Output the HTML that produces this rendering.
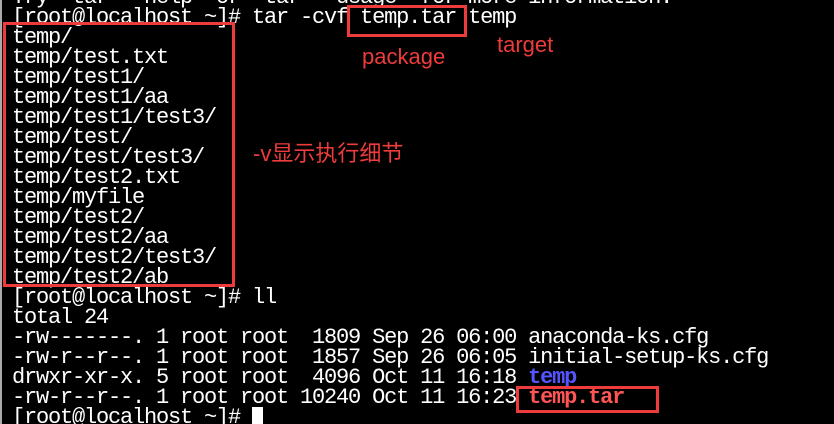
<!DOCTYPE html>
<html><head><meta charset="utf-8"><style>
html,body{margin:0;padding:0;background:#000;width:834px;height:424px;overflow:hidden;position:relative}
.t{position:absolute;left:12px;top:-12px;font-family:"Liberation Mono",monospace;font-size:22px;letter-spacing:-1.2px;color:#fff}
.t div{height:20px;line-height:20px;white-space:pre}
.b{position:absolute;border:3px solid #ee3b3b}
.l{position:absolute;color:#ee3b3b;font-family:"Liberation Sans","Noto Sans CJK SC",sans-serif;font-size:22px;line-height:26px;white-space:nowrap}
.edge{position:absolute;left:0;top:0;width:2px;height:424px;background:#aaa}
</style></head><body>
<div class="edge"></div>
<div class="t"><div>Try 'tar --help' or 'tar --usage' for more information.</div><div>[root@localhost ~]# tar -cvf temp.tar temp</div><div>temp/</div><div>temp/test.txt</div><div>temp/test1/</div><div>temp/test1/aa</div><div>temp/test1/test3/</div><div>temp/test/</div><div>temp/test/test3/</div><div>temp/test2.txt</div><div>temp/myfile</div><div>temp/test2/</div><div>temp/test2/aa</div><div>temp/test2/test3/</div><div>temp/test2/ab</div><div>[root@localhost ~]# ll</div><div>total 24</div><div>-rw-------. 1 root root  1809 Sep 26 06:00 anaconda-ks.cfg</div><div>-rw-r--r--. 1 root root  1857 Sep 26 06:05 initial-setup-ks.cfg</div><div>drwxr-xr-x. 5 root root  4096 Oct 11 16:18 <b style="color:#5555ff">temp</b></div><div>-rw-r--r--. 1 root root 10240 Oct 11 16:23 <b style="color:#ff5555">temp.tar</b></div><div>[root@localhost ~]# </div></div>
<div style="position:absolute;left:252px;top:407px;width:11px;height:17px;background:#fff"></div>
<div class="b" style="left:347px;top:5px;width:114px;height:26px"></div>
<div class="b" style="left:3px;top:22px;width:226px;height:259px"></div>
<div class="b" style="left:516px;top:386px;width:137px;height:21px"></div>
<div class="l" style="left:362px;top:44px">package</div>
<div class="l" style="left:497px;top:32px">target</div>
<div class="l" style="left:253px;top:141px">-v显示执行细节</div>
</body></html>
